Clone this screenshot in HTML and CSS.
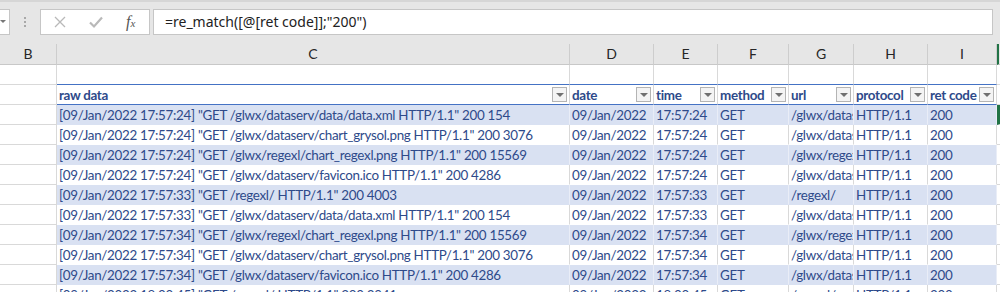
FILE: index.html
```html
<!DOCTYPE html>
<html>
<head>
    <meta charset="UTF-8">
    <title>Sheet</title>
    <link rel="stylesheet" href="styles.css">
</head>
<body>
    <div class="toolbar">
        <div class="namebox"><span class="caret"></span></div>
        <div class="grip"><i></i><i></i><i></i></div>
        <div class="fx-buttons">
            <svg class="ico" width="14" height="14" viewBox="0 0 14 14"><path d="M2 2 L12 12 M12 2 L2 12" stroke="#b9b9b9" stroke-width="1.3" fill="none"/></svg>
            <svg class="ico" width="16" height="14" viewBox="0 0 16 14"><path d="M2 7.5 L6 11.5 L14 2.5" stroke="#b9b9b9" stroke-width="2.2" fill="none"/></svg>
            <span class="fx">f<sub>x</sub></span>
        </div>
        <div class="formula">=re_match([@[ret code]];"200")</div>
    </div>

    <div class="sheet">
        <div class="row colhead">
            <div class="cell">B</div><div class="cell">C</div><div class="cell">D</div><div class="cell">E</div>
            <div class="cell">F</div><div class="cell">G</div><div class="cell">H</div><div class="cell">I</div><div class="cell j"></div>
        </div>
        <div class="row blank">
            <div class="cell"></div><div class="cell"></div><div class="cell"></div><div class="cell"></div>
            <div class="cell"></div><div class="cell"></div><div class="cell"></div><div class="cell"></div><div class="cell"></div>
        </div>
        <div class="row thead">
            <div class="cell"></div>
            <div class="cell"><span>raw data</span><b class="filter"></b></div>
            <div class="cell"><span>date</span><b class="filter"></b></div>
            <div class="cell"><span>time</span><b class="filter"></b></div>
            <div class="cell"><span>method</span><b class="filter"></b></div>
            <div class="cell"><span>url</span><b class="filter"></b></div>
            <div class="cell"><span>protocol</span><b class="filter"></b></div>
            <div class="cell"><span>ret code</span><b class="filter"></b></div>
            <div class="cell"></div>
        </div>
        <div class="row band">
            <div class="cell"></div>
            <div class="cell">[09/Jan/2022 17:57:24] "GET /glwx/dataserv/data/data.xml HTTP/1.1" 200 154</div>
            <div class="cell">09/Jan/2022</div><div class="cell">17:57:24</div><div class="cell">GET</div>
            <div class="cell">/glwx/dataserv/data/data.xml</div><div class="cell">HTTP/1.1</div><div class="cell">200</div>
            <div class="cell active"></div>
        </div>
        <div class="row">
            <div class="cell"></div>
            <div class="cell">[09/Jan/2022 17:57:24] "GET /glwx/dataserv/chart_grysol.png HTTP/1.1" 200 3076</div>
            <div class="cell">09/Jan/2022</div><div class="cell">17:57:24</div><div class="cell">GET</div>
            <div class="cell">/glwx/dataserv/chart_grysol.png</div><div class="cell">HTTP/1.1</div><div class="cell">200</div>
            <div class="cell"></div>
        </div>
        <div class="row band">
            <div class="cell"></div>
            <div class="cell">[09/Jan/2022 17:57:24] "GET /glwx/regexl/chart_regexl.png HTTP/1.1" 200 15569</div>
            <div class="cell">09/Jan/2022</div><div class="cell">17:57:24</div><div class="cell">GET</div>
            <div class="cell">/glwx/regexl/chart_regexl.png</div><div class="cell">HTTP/1.1</div><div class="cell">200</div>
            <div class="cell"></div>
        </div>
        <div class="row">
            <div class="cell"></div>
            <div class="cell">[09/Jan/2022 17:57:24] "GET /glwx/dataserv/favicon.ico HTTP/1.1" 200 4286</div>
            <div class="cell">09/Jan/2022</div><div class="cell">17:57:24</div><div class="cell">GET</div>
            <div class="cell">/glwx/dataserv/favicon.ico</div><div class="cell">HTTP/1.1</div><div class="cell">200</div>
            <div class="cell"></div>
        </div>
        <div class="row band">
            <div class="cell"></div>
            <div class="cell">[09/Jan/2022 17:57:33] "GET /regexl/ HTTP/1.1" 200 4003</div>
            <div class="cell">09/Jan/2022</div><div class="cell">17:57:33</div><div class="cell">GET</div>
            <div class="cell">/regexl/</div><div class="cell">HTTP/1.1</div><div class="cell">200</div>
            <div class="cell"></div>
        </div>
        <div class="row">
            <div class="cell"></div>
            <div class="cell">[09/Jan/2022 17:57:33] "GET /glwx/dataserv/data/data.xml HTTP/1.1" 200 154</div>
            <div class="cell">09/Jan/2022</div><div class="cell">17:57:33</div><div class="cell">GET</div>
            <div class="cell">/glwx/dataserv/data/data.xml</div><div class="cell">HTTP/1.1</div><div class="cell">200</div>
            <div class="cell"></div>
        </div>
        <div class="row band">
            <div class="cell"></div>
            <div class="cell">[09/Jan/2022 17:57:34] "GET /glwx/regexl/chart_regexl.png HTTP/1.1" 200 15569</div>
            <div class="cell">09/Jan/2022</div><div class="cell">17:57:34</div><div class="cell">GET</div>
            <div class="cell">/glwx/regexl/chart_regexl.png</div><div class="cell">HTTP/1.1</div><div class="cell">200</div>
            <div class="cell"></div>
        </div>
        <div class="row">
            <div class="cell"></div>
            <div class="cell">[09/Jan/2022 17:57:34] "GET /glwx/dataserv/chart_grysol.png HTTP/1.1" 200 3076</div>
            <div class="cell">09/Jan/2022</div><div class="cell">17:57:34</div><div class="cell">GET</div>
            <div class="cell">/glwx/dataserv/chart_grysol.png</div><div class="cell">HTTP/1.1</div><div class="cell">200</div>
            <div class="cell"></div>
        </div>
        <div class="row band">
            <div class="cell"></div>
            <div class="cell">[09/Jan/2022 17:57:34] "GET /glwx/dataserv/favicon.ico HTTP/1.1" 200 4286</div>
            <div class="cell">09/Jan/2022</div><div class="cell">17:57:34</div><div class="cell">GET</div>
            <div class="cell">/glwx/dataserv/favicon.ico</div><div class="cell">HTTP/1.1</div><div class="cell">200</div>
            <div class="cell"></div>
        </div>
        <div class="row">
            <div class="cell"></div>
            <div class="cell">[09/Jan/2022 18:00:45] "GET /regexl/ HTTP/1.1" 200 3941</div>
            <div class="cell">09/Jan/2022</div><div class="cell">18:00:45</div><div class="cell">GET</div>
            <div class="cell">/regexl/</div><div class="cell">HTTP/1.1</div><div class="cell">200</div>
            <div class="cell"></div>
        </div>
    </div>
</body>
</html>
```

FILE: styles.css
```css
body {
    margin: 0;
    background: white;
    font-family: Lato, "Liberation Sans", sans-serif;
    overflow: hidden;
}

/* formula bar */
.toolbar {
    height: 44px;
    box-sizing: border-box;
    background: #e6e6e6;
    border-top: 2px solid #d6d6d6;
    padding-top: 7px;
    display: flex;
    align-items: flex-start;
}

.namebox {
    width: 10px;
    height: 26px;
    box-sizing: border-box;
    background: white;
    border: 1px solid #c6c6c6;
    border-left: none;
    position: relative;
}

.caret {
    position: absolute;
    left: 0;
    top: 10px;
    border-left: 3px solid transparent;
    border-right: 3px solid transparent;
    border-top: 3px solid #777;
}

.grip {
    margin-left: 14px;
    padding-top: 8px;
    display: flex;
    flex-direction: column;
    gap: 2px;
}

.grip i {
    display: block;
    width: 2px;
    height: 2px;
    background: #a8a8a8;
}

.fx-buttons {
    margin-left: 14px;
    width: 110px;
    height: 26px;
    box-sizing: border-box;
    background: white;
    border: 1px solid #c6c6c6;
    display: flex;
    align-items: center;
    padding-left: 12px;
}

.fx-buttons .ico {
    margin-right: 21px;
}

.fx {
    font-family: "Liberation Serif", serif;
    font-style: italic;
    font-size: 16px;
    color: #555;
    margin-left: 1px;
}

.fx sub {
    font-size: 11px;
    vertical-align: 0;
}

.formula {
    margin-left: 3px;
    width: 840px;
    height: 26px;
    box-sizing: border-box;
    background: white;
    border: 1px solid #c6c6c6;
    padding-left: 11px;
    font-family: "Noto Sans", sans-serif;
    font-size: 14px;
    line-height: 23px;
    color: #222;
}

/* grid */
.row {
    display: grid;
    grid-template-columns: 57px 513px 84px 64px 71px 65px 74px 69px 1fr;
    height: 20px;
    font-size: 13.4px;
    letter-spacing: -0.3px;
    color: #2e4a8a;
}

.cell {
    box-sizing: border-box;
    border-right: 1px solid #d9d9d9;
    border-bottom: 1px solid #d9d9d9;
    padding: 0 2px;
    white-space: nowrap;
    overflow: hidden;
    line-height: 20px;
}

.colhead {
    background: #e6e6e6;
    height: 21px;
    color: #262626;
    letter-spacing: 0;
    font-size: 14px;
}

.colhead .cell {
    text-align: center;
    border-right-color: #cdcdcd;
    border-bottom-color: #c8c8c8;
    line-height: 20px;
}

.colhead .j {
    border-right: none;
    border-left: 2px solid #217346;
}

.blank .cell:nth-child(n+2):nth-child(-n+8) {
    border-bottom-color: #4472c4;
}

.thead .cell:nth-child(n+2):nth-child(-n+8) {
    border-bottom-color: #4472c4;
    font-weight: bold;
    display: flex;
    align-items: center;
    justify-content: space-between;
    padding-right: 2px;
}

.filter {
    width: 15px;
    height: 15px;
    box-sizing: border-box;
    flex: none;
    background: #f4f4f4;
    border: 1px solid #b4b4b4;
    position: relative;
}

.filter::after {
    content: "";
    position: absolute;
    left: 3px;
    top: 5px;
    border-left: 4px solid transparent;
    border-right: 4px solid transparent;
    border-top: 4px solid #707070;
}

.row:not(.colhead):not(.blank):not(.thead) .cell:nth-child(n+2):nth-child(-n+8) {
    border-bottom-color: transparent;
}

.band .cell:nth-child(n+2):nth-child(-n+8) {
    background: #d9e1f2;
    border-right-color: #e9edf7;
}

.active {
    border-left: 3px solid #217346;
}
```
